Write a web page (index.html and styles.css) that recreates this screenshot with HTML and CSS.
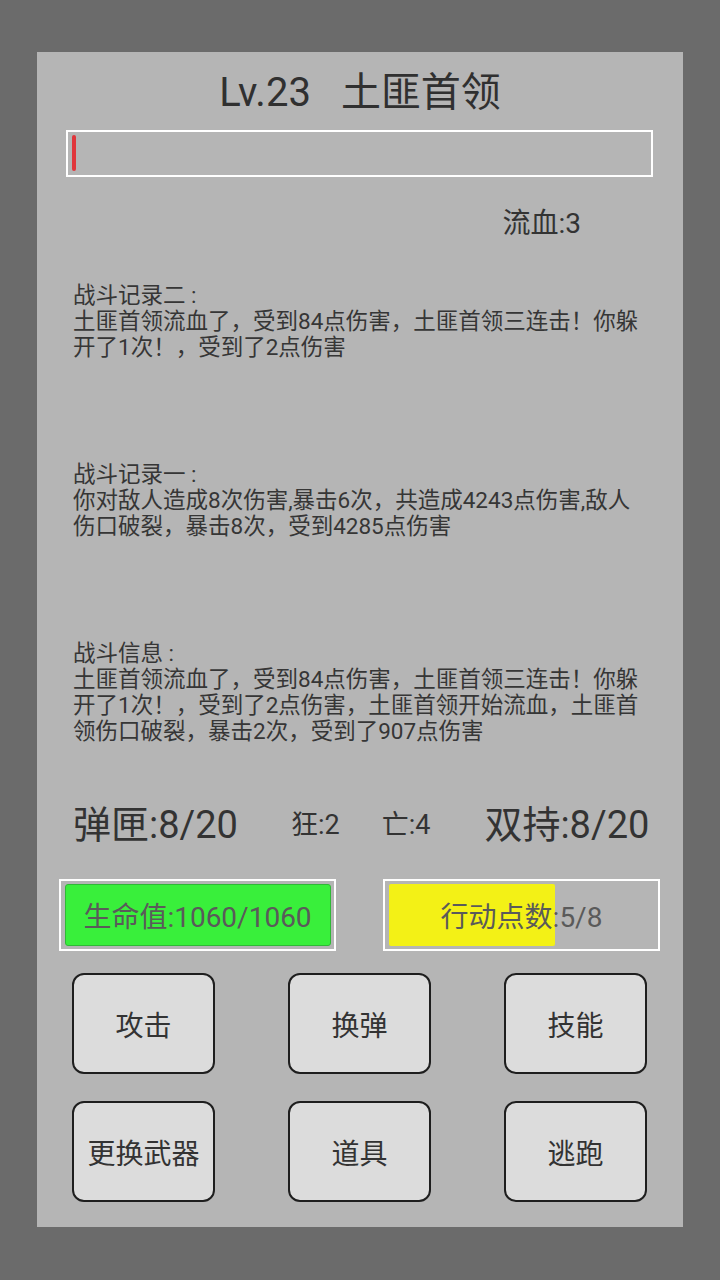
FILE: index.html
```html
<!DOCTYPE html>
<html lang="zh-CN">
<head>
<meta charset="utf-8">
<title>战斗</title>
<link rel="stylesheet" href="styles.css">
</head>
<body>
<div class="panel">
  <div class="title"><span>Lv.23</span><span class="title-name">土匪首领</span></div>
  <div class="namebar"><div class="namebar-fill"></div></div>
  <div class="status-row"><span class="status">流血:3</span></div>

  <div class="log">
    <div class="log-block">
      <div class="log-head">战斗记录二 :</div>
      <div class="log-text">土匪首领流血了，受到84点伤害，土匪首领三连击！你躲开了1次！，受到了2点伤害</div>
    </div>
    <div class="log-block">
      <div class="log-head">战斗记录一 :</div>
      <div class="log-text">你对敌人造成8次伤害,暴击6次，共造成4243点伤害,敌人伤口破裂，暴击8次，受到4285点伤害</div>
    </div>
    <div class="log-block log-last">
      <div class="log-head">战斗信息 :</div>
      <div class="log-text">土匪首领流血了，受到84点伤害，土匪首领三连击！你躲开了1次！，受到了2点伤害，土匪首领开始流血，土匪首领伤口破裂，暴击2次，受到了907点伤害</div>
    </div>
  </div>

  <div class="stats">
    <span class="stat-big">弹匣:8/20</span>
    <span class="stat-small stat-kuang">狂:2</span>
    <span class="stat-small stat-wang">亡:4</span>
    <span class="stat-big stat-dual">双持:8/20</span>
  </div>

  <div class="bars">
    <div class="bar">
      <div class="bar-fill bar-hp" style="width: 100%"></div>
      <div class="bar-label">生命值:1060/1060</div>
    </div>
    <div class="bar">
      <div class="bar-fill bar-ap" style="width: 62.5%"></div>
      <div class="bar-label">行动点数:5/8</div>
    </div>
  </div>

  <div class="buttons">
    <div class="btn">攻击</div>
    <div class="btn">换弹</div>
    <div class="btn">技能</div>
    <div class="btn">更换武器</div>
    <div class="btn">道具</div>
    <div class="btn">逃跑</div>
  </div>
</div>
</body>
</html>
```
FILE: styles.css
```css
html, body {
  margin: 0;
  padding: 0;
}
body {
  background: #6b6b6b;
  width: 720px;
  height: 1280px;
  overflow: hidden;
  font-family: Roboto, "Noto Sans CJK SC", sans-serif;
  color: #333333;
}
.panel {
  box-sizing: border-box;
  width: 646px;
  height: 1175px;
  margin: 52px auto 0;
  background: #b5b5b5;
  padding: 16px 0 0;
  display: flex;
  flex-direction: column;
}
.title {
  height: 50px;
  line-height: 50px;
  font-size: 40px;
  text-align: center;
  color: #303030;
  white-space: nowrap;
}
.title-name {
  margin-left: 30px;
}
.namebar {
  box-sizing: border-box;
  margin: 12px 30px 0 29px;
  height: 47px;
  border: 2px solid #ffffff;
  padding: 3px 4px 4px;
  display: flex;
}
.namebar-fill {
  width: 4px;
  background: #e0363b;
  border-radius: 2px;
}
.status-row {
  margin-top: 30px;
  height: 34px;
  line-height: 34px;
  display: flex;
  justify-content: flex-end;
  padding-right: 102px;
}
.status {
  font-size: 28px;
  color: #333333;
}
.log {
  margin-top: 41px;
  padding: 0 38px 0 36px;
}
.log-block {
  height: 179px;
  font-size: 22.5px;
  line-height: 26px;
  color: #363636;
}
.log-last {
  height: 104px;
}
.log-text {
  width: 572px;
}
.stats {
  margin-top: 57px;
  height: 48px;
  display: flex;
  align-items: center;
  padding-left: 36px;
  white-space: nowrap;
}
.stat-big {
  font-size: 38px;
  line-height: 48px;
  color: #333333;
}
.stat-small {
  font-size: 27px;
  line-height: 48px;
  color: #333333;
}
.stat-kuang {
  margin-left: 53px;
}
.stat-wang {
  margin-left: 42px;
}
.stat-dual {
  margin-left: 54px;
}
.bars {
  margin-top: 30px;
  padding: 0 23px 0 22px;
  display: flex;
  gap: 47px;
}
.bar {
  position: relative;
  box-sizing: border-box;
  width: 277px;
  height: 72px;
  border: 2px solid #ffffff;
  padding: 3px 3px 3px 4px;
}
.bar-fill {
  box-sizing: border-box;
  height: 100%;
}
.bar-hp {
  background: #39ef3b;
  border: 1px solid #2fb936;
  border-radius: 3px;
}
.bar-ap {
  background: #f3f116;
  border-radius: 2px;
}
.bar-label {
  position: absolute;
  inset: 0;
  display: flex;
  align-items: center;
  justify-content: center;
  font-size: 28px;
  color: #5a5a5a;
  white-space: nowrap;
}
.buttons {
  margin-top: 22px;
  padding: 0 36px 0 35px;
  display: grid;
  grid-template-columns: repeat(3, 143px);
  grid-auto-rows: 101px;
  column-gap: 73px;
  row-gap: 27px;
}
.btn {
  box-sizing: border-box;
  background: #dcdcdc;
  border: 2px solid #1e1e1e;
  border-radius: 12px;
  display: flex;
  align-items: center;
  justify-content: center;
  font-size: 28px;
  color: #333333;
  white-space: nowrap;
}
```
